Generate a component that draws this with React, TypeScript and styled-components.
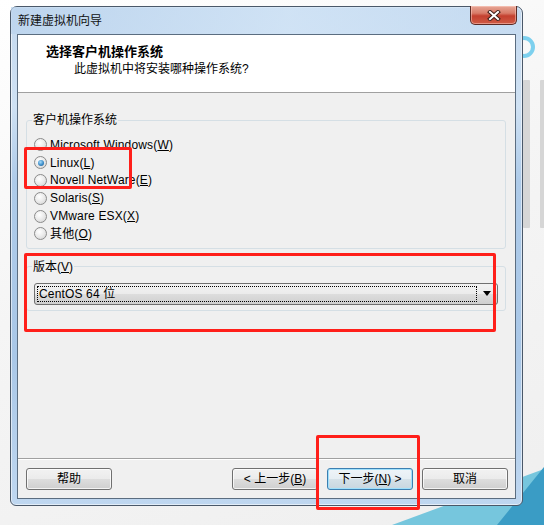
import React from 'react';
import styled, { createGlobalStyle } from 'styled-components';

const GlobalStyle = createGlobalStyle`
  html, body {
    margin: 0;
    padding: 0;
  }
  body {
    font-family: 'Liberation Sans', 'Noto Sans CJK SC', sans-serif;
    font-size: 12px;
    color: #000;
  }
`;

const Desktop = styled.div`
  position: relative;
  width: 544px;
  height: 525px;
  overflow: hidden;
  box-sizing: border-box;
  padding: 6px 0 0 10px;
  background: linear-gradient(160deg, #ffffff 0%, #f5f5f5 45%, #efefef 100%);
`;

const Wallpaper = styled.svg`
  position: absolute;
  left: 0;
  top: 0;
`;

const Window = styled.div`
  position: relative;
  width: 513px;
  height: 500px;
  box-sizing: border-box;
  display: flex;
  flex-direction: column;
  padding: 0 6px 6px 6px;
  border: 1px solid #4a5869;
  border-radius: 7px 7px 6px 6px;
  background: linear-gradient(
    to bottom,
    #c4d9ef 0%,
    #cfe1f3 20%,
    #aecbe9 35%,
    #a9c7e7 70%,
    #bfd7f0 100%
  );
  box-shadow: inset 0 0 0 1px rgba(255, 255, 255, 0.55);
`;

const TitleBar = styled.div`
  height: 27px;
  display: flex;
  justify-content: space-between;
  align-items: flex-start;
  margin: 0 -1px 0 -6px;
  padding-left: 7px;
  background: linear-gradient(
    to right,
    rgba(186, 211, 237, 0.7) 0%,
    rgba(212, 230, 247, 0.7) 55%,
    rgba(198, 220, 242, 0.6) 100%
  );
`;

const TitleText = styled.span`
  padding-top: 6px;
  line-height: 16px;
  color: #111;
`;

const CloseButton = styled.div`
  width: 47px;
  height: 19px;
  margin-top: -1px;
  box-sizing: border-box;
  border: 1px solid #5a2a24;
  border-top: none;
  border-radius: 0 0 5px 5px;
  display: flex;
  align-items: center;
  justify-content: center;
  background: linear-gradient(
    to bottom,
    #e7a797 0%,
    #d87b68 40%,
    #c4402f 55%,
    #cf5b45 100%
  );
  box-shadow: inset 0 0 0 1px rgba(255, 210, 200, 0.5);
`;

const Client = styled.div`
  flex: 1;
  display: flex;
  flex-direction: column;
  border: 1px solid #5b6d80;
  background: #f0f0f0;
`;

const Header = styled.div`
  height: 58px;
  flex: none;
  box-sizing: border-box;
  padding-top: 9px;
  background: #ffffff;
  border-bottom: 1px solid #a0a0a0;
`;

const HeaderTitle = styled.div`
  padding-left: 28px;
  font-size: 13px;
  font-weight: bold;
  line-height: 16px;
`;

const HeaderSubtitle = styled.div`
  padding-left: 56px;
  margin-top: 1px;
  line-height: 16px;
`;

const Body = styled.div`
  flex: 1;
  padding: 19px 9px 0 8px;
`;

const GroupBox = styled.fieldset<{ $gap?: number }>`
  margin: ${({ $gap }) => $gap ?? 0}px 0 0 0;
  min-width: 0;
  padding: 0 7px 5px 7px;
  border: 1px solid #d5dfe5;
  border-radius: 3px;
`;

const Legend = styled.legend`
  margin-left: -2px;
  padding: 0 1px;
  line-height: 16px;
`;

const RadioList = styled.div`
  margin-top: 8px;
  display: flex;
  flex-direction: column;
`;

const RadioRow = styled.label`
  height: 17.8px;
  display: flex;
  align-items: center;
  gap: 3px;
  line-height: 16px;
  letter-spacing: 0.15px;
`;

const RadioMark = styled.span<{ $checked?: boolean }>`
  width: 13px;
  height: 13px;
  flex: none;
  box-sizing: border-box;
  border-radius: 50%;
  border: 1px solid #8b8b8b;
  display: flex;
  align-items: center;
  justify-content: center;
  background: radial-gradient(
    circle at 40% 35%,
    #ffffff 0%,
    #ececec 45%,
    #d0d0d0 100%
  );

  &::after {
    content: '';
    display: ${({ $checked }) => ($checked ? 'block' : 'none')};
    width: 6px;
    height: 6px;
    border-radius: 50%;
    background: radial-gradient(
      circle at 40% 35%,
      #a8dcfa 0%,
      #3b8dca 55%,
      #1b4f7e 100%
    );
  }
`;

const Mnemonic = styled.u`
  text-underline-offset: 1px;
`;

const Combo = styled.div`
  margin-top: 8px;
  height: 22px;
  box-sizing: border-box;
  display: flex;
  padding: 2px 0 2px 2px;
  border: 1px solid #707070;
  border-radius: 3px;
  background: linear-gradient(
    to bottom,
    #f2f2f2 0%,
    #ebebeb 50%,
    #dddddd 51%,
    #cfcfcf 100%
  );
`;

const ComboValue = styled.div`
  flex: 1;
  border: 1px dotted #000;
  padding-left: 1px;
  line-height: 14px;
  letter-spacing: 0.15px;
`;

const ComboArrow = styled.div`
  width: 20px;
  flex: none;
  display: flex;
  align-items: center;
  justify-content: center;
`;

const Footer = styled.div`
  height: 40px;
  flex: none;
  box-sizing: border-box;
  border-top: 1px solid #a0a0a0;
  box-shadow: inset 0 1px #ffffff;
  padding: 9px 7px 0 8px;
  display: flex;
  align-items: flex-start;
`;

const NavButtons = styled.div`
  margin-left: auto;
  display: flex;
  gap: 9px;
`;

const Button = styled.button<{ $default?: boolean }>`
  width: 86px;
  height: 22px;
  box-sizing: border-box;
  padding: 0;
  font: inherit;
  font-size: 12px;
  line-height: 18px;
  color: #000;
  border-radius: 3px;
  border: 1px solid ${({ $default }) => ($default ? '#3c7fb1' : '#707070')};
  background: ${({ $default }) =>
    $default
      ? 'linear-gradient(to bottom, #eef4f8 0%, #e6eef3 50%, #d5e1e8 51%, #c8d6df 100%)'
      : 'linear-gradient(to bottom, #f2f2f2 0%, #ebebeb 50%, #dddddd 51%, #cfcfcf 100%)'};
  box-shadow: inset 0 0 0 1px
    ${({ $default }) => ($default ? '#9fe0fc' : 'rgba(255, 255, 255, 0.75)')};
`;

const Marker = styled.div<{ $x: number; $y: number; $w: number; $h: number }>`
  position: absolute;
  left: ${({ $x }) => $x}px;
  top: ${({ $y }) => $y}px;
  width: ${({ $w }) => $w}px;
  height: ${({ $h }) => $h}px;
  box-sizing: border-box;
  border: 3px solid #ff1f1a;
  border-radius: 2px;
  pointer-events: none;
`;

const osOptions = [
  { label: 'Microsoft Windows', key: 'W' },
  { label: 'Linux', key: 'L', checked: true },
  { label: 'Novell NetWare', key: 'E' },
  { label: 'Solaris', key: 'S' },
  { label: 'VMware ESX', key: 'X' },
  { label: '其他', key: 'O' },
];

const App: React.FC = () => (
  <Desktop>
    <GlobalStyle />
    <Wallpaper width="544" height="525" viewBox="0 0 544 525">
      <circle cx="524" cy="47" r="9" fill="none" stroke="#7dd0ee" strokeWidth="4" />
      <rect x="523" y="80" width="7" height="148" rx="1" fill="#d6d6d6" />
      <rect x="540" y="80" width="8" height="148" rx="1" fill="#d6d6d6" />
      <polygon points="392,525 544,469 544,525" fill="#76c6dd" />
      <polygon points="497,525 544,467 544,525" fill="#3a9cc5" />
    </Wallpaper>
    <Window>
      <TitleBar>
        <TitleText>新建虚拟机向导</TitleText>
        <CloseButton>
          <svg width="14" height="11" viewBox="0 0 14 11">
            <path d="M3 2 L11 9 M11 2 L3 9" stroke="#3d1d18" strokeWidth="4" strokeLinecap="square" />
            <path d="M3 2 L11 9 M11 2 L3 9" stroke="#ffffff" strokeWidth="2" strokeLinecap="square" />
          </svg>
        </CloseButton>
      </TitleBar>
      <Client>
        <Header>
          <HeaderTitle>选择客户机操作系统</HeaderTitle>
          <HeaderSubtitle>此虚拟机中将安装哪种操作系统?</HeaderSubtitle>
        </Header>
        <Body>
          <GroupBox>
            <Legend>客户机操作系统</Legend>
            <RadioList>
              {osOptions.map((os) => (
                <RadioRow key={os.key}>
                  <RadioMark $checked={os.checked} />
                  <span>
                    {os.label}(<Mnemonic>{os.key}</Mnemonic>)
                  </span>
                </RadioRow>
              ))}
            </RadioList>
          </GroupBox>
          <GroupBox $gap={10}>
            <Legend>
              版本(<Mnemonic>V</Mnemonic>)
            </Legend>
            <Combo>
              <ComboValue>CentOS 64 位</ComboValue>
              <ComboArrow>
                <svg width="8" height="5" viewBox="0 0 8 5">
                  <path d="M0 0 H8 L4 5 Z" fill="#000" />
                </svg>
              </ComboArrow>
            </Combo>
          </GroupBox>
        </Body>
        <Footer>
          <Button>帮助</Button>
          <NavButtons>
            <Button>
              &lt; 上一步(<Mnemonic>B</Mnemonic>)
            </Button>
            <Button $default>
              下一步(<Mnemonic>N</Mnemonic>) &gt;
            </Button>
            <Button>取消</Button>
          </NavButtons>
        </Footer>
      </Client>
    </Window>
    <Marker $x={24} $y={147} $w={108} $h={42} />
    <Marker $x={24} $y={253} $w={472} $h={79} />
    <Marker $x={316} $y={435} $w={104} $h={75} />
  </Desktop>
);

export default App;
